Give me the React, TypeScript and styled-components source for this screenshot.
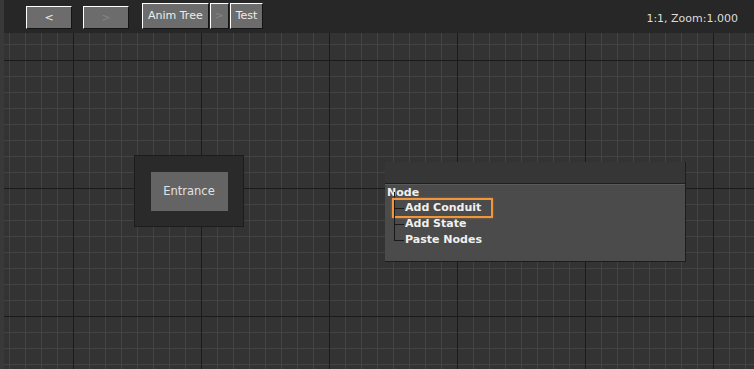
import styled, { createGlobalStyle } from "styled-components";

const GlobalStyle = createGlobalStyle`
    html, body {
        margin: 0;
        padding: 0;
        background: #333333;
        overflow: hidden;
    }
    #root {
        width: 754px;
        height: 369px;
    }
`;

// Page frame
const Frame = styled.div`
    display: flex;
    flex-direction: row;
    width: 754px;
    height: 369px;
    font-family: "DejaVu Sans", Verdana, sans-serif;
    font-size: 11px;
`;

const SideStrip = styled.div`
    width: 4px;
    flex: none;
    background: #393939;
`;

const Main = styled.div`
    flex: 1;
    display: flex;
    flex-direction: column;
    min-width: 0;
`;

// Toolbar
const Toolbar = styled.div`
    box-sizing: border-box;
    height: 33px;
    flex: none;
    display: flex;
    flex-direction: row;
    align-items: flex-end;
    padding: 0 16px 4px 22px;
    background: #272727;
`;

const NavGroup = styled.div`
    display: flex;
    align-items: flex-end;
    gap: 11px;
    margin-right: 13px;
`;

const Crumbs = styled.div`
    display: flex;
    align-items: flex-end;
    gap: 1px;
`;

type ButtonProps = {
    $disabled?: boolean;
    $width?: number;
    $tall?: boolean;
};

const ToolButton = styled.div<ButtonProps>`
    box-sizing: border-box;
    display: flex;
    align-items: center;
    justify-content: center;
    height: ${({ $tall }) => ($tall ? "26px" : "23px")};
    width: ${({ $width }) => ($width ? `${$width}px` : "auto")};
    padding: 0 5px 1px;
    background: #6c6c6c;
    border-top: 1px solid #ffffff;
    border-left: 1px solid #ffffff;
    border-bottom: 1px solid #141414;
    border-right: 1px solid #141414;
    color: ${({ $disabled }) => ($disabled ? "#858585" : "#ececec")};
    font-size: 11px;
    line-height: 1;
`;

const ZoomLabel = styled.div`
    margin-left: auto;
    align-self: center;
    margin-top: 7px;
    color: #dcdcdc;
    font-size: 11px;
`;

// Canvas
const Canvas = styled.div`
    position: relative;
    flex: 1;
    background-color: #333333;
    background-image:
        linear-gradient(to right, #1b1b1b 1px, transparent 1px),
        linear-gradient(to bottom, #1b1b1b 1px, transparent 1px),
        linear-gradient(to right, #434343 1px, transparent 1px),
        linear-gradient(to bottom, #434343 1px, transparent 1px);
    background-size: 128px 128px, 128px 128px, 16px 16px, 16px 16px;
    background-position: 69px 0, 0 27px, 5px 0, 0 11px;
    overflow: hidden;
`;

type PlaceProps = {
    $x: number;
    $y: number;
};

const StateNode = styled.div<PlaceProps>`
    position: absolute;
    left: ${({ $x }) => $x}px;
    top: ${({ $y }) => $y}px;
    box-sizing: border-box;
    width: 110px;
    height: 72px;
    display: flex;
    align-items: center;
    justify-content: center;
    background: #2a2a2a;
    border: 1px solid #1c1c1c;
`;

const NodeLabel = styled.div`
    width: 77px;
    height: 39px;
    display: flex;
    align-items: center;
    justify-content: center;
    background: #646464;
    color: #e2e2e2;
    font-size: 11.5px;
`;

// Context menu
const Menu = styled.div<PlaceProps>`
    position: absolute;
    left: ${({ $x }) => $x}px;
    top: ${({ $y }) => $y}px;
    box-sizing: border-box;
    width: 301px;
    height: 100px;
    display: flex;
    flex-direction: column;
    border-right: 1px solid #1e1e1e;
    border-bottom: 1px solid #1e1e1e;
`;

const MenuHeader = styled.div`
    height: 21px;
    flex: none;
    background: #363636;
    border-bottom: 1px solid #1f1f1f;
`;

const MenuBody = styled.div`
    flex: 1;
    background: #4b4b4b;
    border-top: 1px solid #5a5a5a;
    padding: 1px 0 0 2px;
    color: #f0f0f0;
    font-weight: bold;
    font-size: 11px;
`;

const MenuTitle = styled.div`
    height: 13px;
    line-height: 13px;
`;

const TreeList = styled.div`
    position: relative;
    margin-left: 7px;
    padding-top: 1px;
`;

const TreeItem = styled.div`
    position: relative;
    height: 16px;
    display: flex;
    align-items: center;
    padding-left: 11px;
    line-height: 16px;

    &::before {
        content: "";
        position: absolute;
        left: 0;
        top: -8px;
        height: 16px;
        border-left: 1px solid #1a1a1a;
    }

    &::after {
        content: "";
        position: absolute;
        left: 0;
        top: 8px;
        width: 10px;
        border-top: 1px solid #1a1a1a;
    }
`;

const Highlight = styled.div`
    position: absolute;
    left: -2px;
    top: -2px;
    width: 101px;
    height: 20px;
    box-sizing: border-box;
    border: 2px solid #f2963b;
    box-shadow: 0 0 2px rgba(242, 150, 59, 0.45);
    pointer-events: none;
`;

export default function App() {
    return (
        <>
            <GlobalStyle />
            <Frame>
                <SideStrip />
                <Main>
                    <Toolbar>
                        <NavGroup>
                            <ToolButton $width={46}>&lt;</ToolButton>
                            <ToolButton $width={46} $disabled>&gt;</ToolButton>
                        </NavGroup>
                        <Crumbs>
                            <ToolButton $tall>Anim Tree</ToolButton>
                            <ToolButton $tall $width={19} $disabled>&gt;</ToolButton>
                            <ToolButton $tall>Test</ToolButton>
                        </Crumbs>
                        <ZoomLabel>1:1, Zoom:1.000</ZoomLabel>
                    </Toolbar>
                    <Canvas>
                        <StateNode $x={130} $y={122}>
                            <NodeLabel>Entrance</NodeLabel>
                        </StateNode>
                        <Menu $x={381} $y={129}>
                            <MenuHeader />
                            <MenuBody>
                                <MenuTitle>Node</MenuTitle>
                                <TreeList>
                                    <TreeItem>
                                        Add Conduit
                                        <Highlight />
                                    </TreeItem>
                                    <TreeItem>Add State</TreeItem>
                                    <TreeItem>Paste Nodes</TreeItem>
                                </TreeList>
                            </MenuBody>
                        </Menu>
                    </Canvas>
                </Main>
            </Frame>
        </>
    );
}
